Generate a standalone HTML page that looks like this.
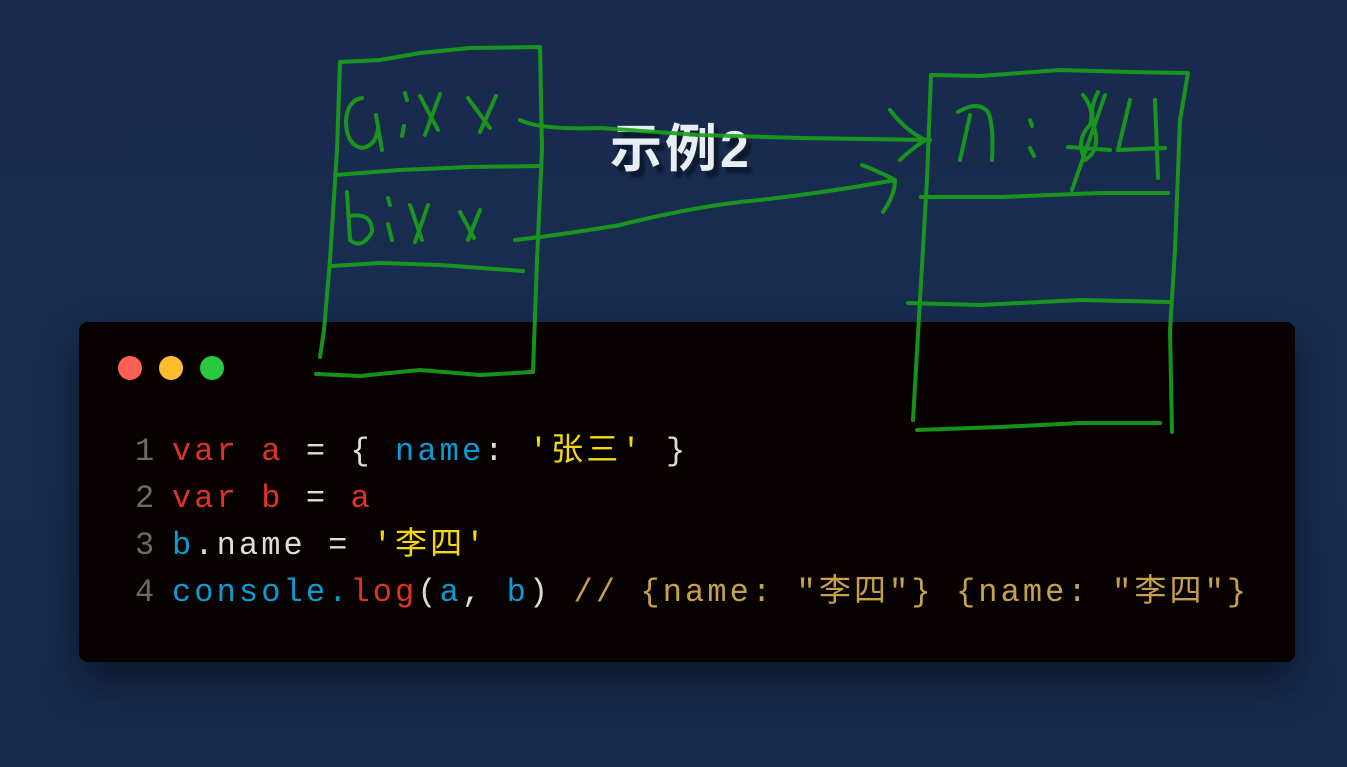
<!DOCTYPE html>
<html><head><meta charset="utf-8"><style>
html,body{margin:0;padding:0}
body{width:1347px;height:767px;overflow:hidden;background:linear-gradient(180deg,#182b4d 0%,#172c4f 60%,#152a4d 100%);position:relative;font-family:"Liberation Sans","Noto Sans CJK SC",sans-serif}
.title{position:absolute;left:610px;top:107px;font-size:52px;font-weight:bold;color:#e9eef3;text-shadow:5px 6px 2px rgba(10,20,40,.8);letter-spacing:3px;z-index:1}
.card{position:absolute;left:79px;top:322px;width:1216px;height:340px;background:#070200;border-radius:9px;box-shadow:0 20px 40px rgba(0,0,0,.45)}
.dot{position:absolute;top:356px;width:24px;height:24px;border-radius:50%}
.code{position:absolute;left:135px;top:428px;font-family:"Liberation Mono","Noto Sans CJK SC",monospace;font-size:32px;letter-spacing:3.1px;line-height:47px;color:#ddd;white-space:pre}
.n{color:#6b6b6b;display:inline-block;width:37px}.r{color:#df3326}.b{color:#0b9ad6}.y{color:#f5d90c}.c{color:#c7a14a}.w{color:#d8d8d8}
svg{position:absolute;left:0;top:0;z-index:2}
</style></head><body>
<div class="card"></div>
<div class="dot" style="left:118px;background:#fe5f57"></div>
<div class="dot" style="left:159px;background:#febc2e"></div>
<div class="dot" style="left:200px;background:#28c840"></div>
<div class="code"><span class="n">1</span><span class="r">var a</span> = { <span class="b">name</span>: <span class="y">'张三'</span> }
<span class="n">2</span><span class="r">var b</span> = <span class="r">a</span>
<span class="n">3</span><span class="b">b</span>.name = <span class="y">'李四'</span>
<span class="n">4</span><span class="b">console.</span><span class="r">log</span><span class="w">(</span><span class="b">a</span>, <span class="b">b</span>) <span class="c">// {name: "李四"} {name: "李四"}</span></div>
<div class="title">示例2</div>
<svg width="1347" height="767" viewBox="0 0 1347 767" fill="none" stroke="#1aa11a" stroke-width="4" stroke-linecap="round" stroke-linejoin="round" opacity="0.9">
<path d="M340 62 L380 60 L420 53 L470 48 L540 47"/>
<path d="M540 47 L542 150 L537 260 L533 372"/>
<path d="M340 62 L337 150 L330 260 L324 330 L320 357"/>
<path d="M316 374 L360 376 L420 370 L480 375 L532 372"/>
<path d="M335 175 L400 170 L470 167 L538 166"/>
<path d="M331 266 L380 263 L440 265 L523 271"/>
<path d="M362 98 Q348 100 346 120 Q346 145 362 148 Q376 146 378 128 M376 115 L382 150"/>
<path d="M405 93 L407 100 M404 126 L402 136"/>
<path d="M420 96 L438 130 M440 94 L425 135 M468 98 L490 128 M496 96 L480 132"/>
<path d="M347 192 L350 240 Q362 250 372 232 Q372 212 350 216"/>
<path d="M388 198 L390 205 M388 224 L392 240 M410 205 L422 240 M428 205 L415 242 M460 212 L474 238 M480 210 L468 240"/>
<path d="M520 120 Q540 130 600 128 L700 135 L800 138 L930 140"/>
<path d="M890 110 Q905 130 925 140 Q910 150 900 160"/>
<path d="M515 240 Q560 235 620 225 Q700 205 760 200 Q830 192 895 180"/>
<path d="M862 165 Q880 172 895 180 Q895 195 883 212"/>
<path d="M931 75 L980 76 L1060 70 L1130 72 L1188 73"/>
<path d="M1188 73 L1180 120 L1175 250 L1170 330 L1172 432"/>
<path d="M931 75 L927 180 L920 300 L913 420"/>
<path d="M921 197 L1000 197 L1100 193 L1168 193"/>
<path d="M908 303 L980 305 L1080 300 L1170 302"/>
<path d="M917 430 L1000 427 L1080 423 L1160 423"/>
<path d="M960 160 L970 115 M958 112 Q978 100 988 112 Q994 125 992 160"/>
<path d="M1030 120 L1032 126 M1030 148 L1034 156"/>
<path d="M1083 95 Q1095 110 1090 125 Q1075 140 1085 160 Q1100 150 1095 130 Q1088 110 1098 92 M1072 190 L1105 95 M1068 147 L1110 150"/>
<path d="M1130 100 L1118 150 L1165 148 M1155 100 L1158 178"/>
</svg>
</body></html>
